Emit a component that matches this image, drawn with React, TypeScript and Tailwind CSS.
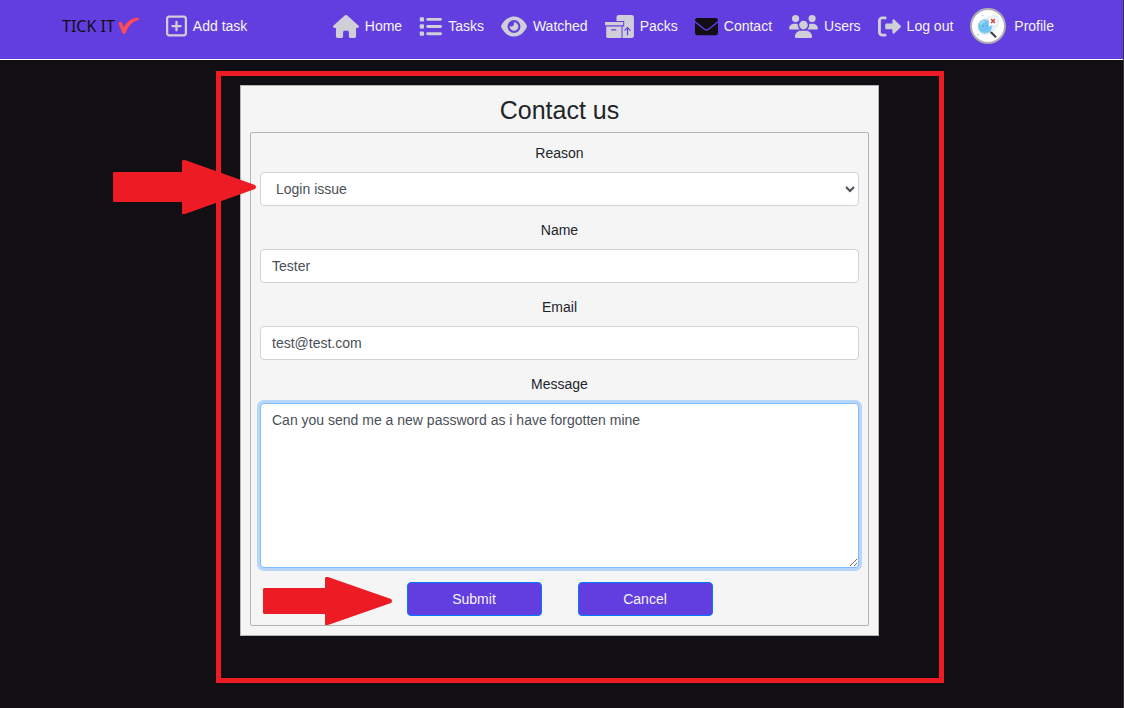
import type { ReactNode } from "react";
import { FaEye, FaHouse, FaList, FaRegSquarePlus, FaUsers } from "react-icons/fa6";

function EnvelopeIcon() {
  return (
    <svg viewBox="0 0 512 512" className="size-[23px]" fill="currentColor" aria-hidden="true">
      <path d="M256 352c-16.530 0-33.060-5.422-47.160-16.410L0 173.200V400C0 426.500 21.490 448 48 448h416c26.510 0 48-21.490 48-48V173.200l-208.800 162.500C289.100 346.600 272.500 352 256 352zM16.290 145.300l212.200 165.100c16.190 12.600 38.870 12.600 55.060 0l212.200-165.100C505.100 137.300 512 125 512 112C512 85.490 490.500 64 464 64h-416C21.490 64 0 85.490 0 112C0 125 6.010 137.300 16.290 145.300z" />
    </svg>
  );
}

function LogOutIcon() {
  return (
    <svg viewBox="0 0 512 512" className="size-[23px]" fill="currentColor" aria-hidden="true">
      <path d="M96 480h64C177.700 480 192 465.700 192 448S177.700 416 160 416H96c-17.670 0-32-14.330-32-32V128c0-17.670 14.330-32 32-32h64C177.700 96 192 81.670 192 64S177.700 32 160 32H96C42.980 32 0 74.980 0 128v256C0 437 42.980 480 96 480zM504.800 238.500l-144.100-136c-6.975-6.578-17.200-8.375-26-4.594c-8.803 3.797-14.510 12.470-14.510 22.050v72H192c-17.690 0-32.020 14.330-32.020 32v64c0 17.670 14.340 32 32.020 32h128.190v72c0 9.578 5.707 18.250 14.510 22.050c8.803 3.781 19.030 1.984 26-4.594l144.100-136C514.400 264.400 514.400 247.600 504.800 238.500z" />
    </svg>
  );
}

function PacksIcon() {
  return (
    <svg viewBox="0 0 29 23" className="h-[23px] w-[29px]" fill="currentColor" aria-hidden="true">
      <path d="M11.500 6V2.200a2.200 2.200 0 0 1 2.200-2.200h13a2.200 2.200 0 0 1 2.200 2.200v18.600a2.200 2.200 0 0 1-2.200 2.200H17.500V11.400h1.700V6z" />
      <path d="M0 7h18.200v3.300H0z" />
      <path d="M1.200 11.400h15.300V23H2.800a1.600 1.600 0 0 1-1.600-1.600z" />
      <path
        d="M6.200 14.800h5M22.500 20.200v-7.200M19.500 15.700l3-3 3 3"
        fill="none"
        stroke="#623ee1"
        strokeWidth="1.200"
      />
    </svg>
  );
}

function Avatar() {
  return (
    <svg viewBox="0 0 36 36" className="size-9" aria-hidden="true">
      <circle cx="18" cy="18" r="17" fill="#fdfdfd" stroke="#adadb2" strokeWidth="2" />
      <path
        d="M8 19c-1-7 4-8 8-9s6-4 10-3 4 7 2 11-6 8-11 9-8-3-9-8z"
        fill="#e0f4fb"
      />
      <circle cx="15" cy="18.500" r="6.800" fill="#70c4f3" stroke="#a4cfe4" strokeWidth="1" />
      <path d="M10.300 16.500a5.500 5.500 0 0 1 4.500-3" stroke="#a9def9" strokeWidth="1.500" fill="none" />
      <path d="M13 17v1.500M17 17v1.500" stroke="#4a8cb8" strokeWidth=".9" />
      <path d="m20 23.500 1.500 1.500" stroke="#8d979f" strokeWidth="1.500" />
      <path d="m21.500 24.800 4 4" stroke="#353b45" strokeWidth="2" strokeLinecap="round" />
      <path d="M19 9h8v8h-6l-2 1.500z" fill="#fff" stroke="#e6e8ea" strokeWidth=".6" />
      <path d="m21 11 4 4m0-4-4 4" stroke="#d83b3b" strokeWidth="1.500" />
      <circle cx="12.500" cy="7.500" r=".8" fill="#88d3ee" />
      <circle cx="8" cy="26.500" r=".8" fill="#88d3ee" />
    </svg>
  );
}

function NavLink({
  icon,
  label,
  active = false,
}: {
  icon: ReactNode;
  label: string;
  active?: boolean;
}) {
  return (
    <a href="#" className="flex items-center gap-1.5 whitespace-nowrap text-[#f5f5f5]">
      <span className={active ? "text-[#110e14]" : "text-[#d0ced6]"}>{icon}</span>
      {label}
    </a>
  );
}

function Header() {
  return (
    <header className="flex flex-wrap items-center border-b border-white bg-[#623ee1] pt-2 pr-[69px] pb-[15px] pl-[62px]">
      <a
        href="#"
        className="mr-[26px] flex items-center gap-[3px] font-['Noto_Sans',sans-serif] text-base leading-6 whitespace-nowrap text-[#110e14]"
      >
        TICK IT
        <svg viewBox="0 0 22 18" className="h-[18px] w-[22px]" aria-hidden="true">
          <path
            d="M.800 6.500c.2-1.500 2.200-2 2.900-.6l2.200 4.600C8.500 5.500 13 1.500 18.500 1c1.600-.1 2.500.1 2.400.9-.1.800-1.300 1.200-2.600 1.600C13 5.500 9.900 9.500 7.300 16c-.5 1.100-2 1.100-2.500 0z"
            fill="#ff4c57"
            stroke="#ff4c57"
            strokeWidth=".6"
          />
        </svg>
      </a>
      <NavLink icon={<FaRegSquarePlus className="h-6 w-[21px]" />} label="Add task" />
      <nav className="ml-auto flex flex-wrap items-center gap-x-[17px]">
        <NavLink icon={<FaHouse className="h-[23px] w-[26px]" />} label="Home" />
        <NavLink icon={<FaList className="size-[23px]" />} label="Tasks" />
        <NavLink icon={<FaEye className="h-[23px] w-[26px]" />} label="Watched" />
        <NavLink icon={<PacksIcon />} label="Packs" />
        <NavLink icon={<EnvelopeIcon />} label="Contact" active />
        <NavLink icon={<FaUsers className="h-[23px] w-[29px]" />} label="Users" />
        <NavLink icon={<LogOutIcon />} label="Log out" />
        <a href="#" className="flex items-center gap-2 text-[#f5f5f5]">
          <Avatar />
          Profile
        </a>
      </nav>
    </header>
  );
}

const label = "mb-2 block text-center leading-[21px] text-[#212529]";
const field =
  "mb-[14px] block h-[34px] w-full rounded-[4px] border border-[#ced4da] bg-white px-[11px] text-[#495057]";
const button =
  "h-[34px] w-[135px] rounded-[4px] border border-[#007bff] bg-[#623ee1] text-center text-[#f5f5f5]";

function ContactForm() {
  return (
    <form className="border border-[#b3b3b3] bg-[#f5f5f5] px-[9px] pb-[9px]">
      <h1 className="pt-2 pb-1.5 text-center text-[25px] leading-8 text-[#212529]">Contact us</h1>
      <div className="rounded-[2px] border border-[#b3b3b3] px-[9px] pt-[10px] pb-[9px]">
        <label htmlFor="reason" className={label}>
          Reason
        </label>
        <select id="reason" className={field}>
          <option>Login issue</option>
        </select>
        <label htmlFor="name" className={label}>
          Name
        </label>
        <input id="name" type="text" defaultValue="Tester" className={field} />
        <label htmlFor="email" className={label}>
          Email
        </label>
        <input id="email" type="email" defaultValue="test@test.com" className={field} />
        <label htmlFor="message" className={label}>
          Message
        </label>
        <textarea
          id="message"
          spellCheck={false}
          defaultValue="Can you send me a new password as i have forgotten mine"
          className="mb-[14px] block h-[165px] w-full resize rounded-[4px] border border-[#80bdff] bg-white px-[11px] py-[5px] leading-[22px] text-[#495057] ring-3 ring-[#007bff]/25 outline-none"
        />
        <div className="flex flex-wrap justify-center gap-9">
          <button type="submit" className={button}>
            Submit
          </button>
          <button type="button" className={button}>
            Cancel
          </button>
        </div>
      </div>
    </form>
  );
}

export default function App() {
  return (
    <div className="min-h-screen border-r border-[#35323a] bg-[#110e14] font-['Liberation_Sans',Arial,sans-serif] text-[14px]">
      <Header />
      <main className="flex justify-center pt-[25px] pr-1 pb-[72px]">
        <div className="relative w-full max-w-[639px]">
          <ContactForm />
          <div className="pointer-events-none absolute -top-[14px] -right-[65px] -bottom-[47px] -left-6 border-5 border-[#ed1c24]" />
          <svg
            viewBox="0 0 144 54"
            className="pointer-events-none absolute top-[75px] -left-[127px] h-[54px] w-36"
            fill="#ed1c24"
            aria-hidden="true"
          >
            <path d="M1 12h68V1l1-1h2l70 25q2 2 0 4L72 54h-3V42H1l-1-1V13z" />
          </svg>
          <svg
            viewBox="0 0 130 48"
            className="pointer-events-none absolute top-[492px] left-[23px] h-12 w-[130px]"
            fill="#ed1c24"
            aria-hidden="true"
          >
            <path d="M1 11h61V1l1-1h2l63 22q2 2 0 4L65 48h-3V37H1l-1-1V12z" />
          </svg>
        </div>
      </main>
    </div>
  );
}
